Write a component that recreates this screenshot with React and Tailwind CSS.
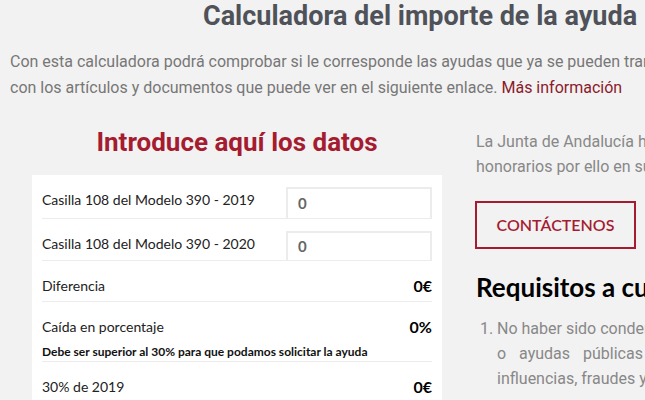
export default function App() {
  return (
    <div className="w-[645px] h-[400px] overflow-hidden bg-[#f2f2f2] font-['Roboto',sans-serif]">
      <h1 className="whitespace-nowrap pl-[203px] text-[27px] leading-[32px] font-bold text-[#4f5259]">
        Calculadora del importe de la ayuda
      </h1>
      <p className="mt-[17px] pl-[10px] whitespace-nowrap text-[16px] leading-[26px] text-[#777]">
        Con esta calculadora podrá comprobar si le corresponde las ayudas que ya se pueden tramitar de acuerdo
        <br />
        con los artículos y documentos que puede ver en el siguiente enlace.{" "}
        <a className="text-[#8b1a2b]">Más información</a>
      </p>
      <div className="flex mt-[24px]">
        <div className="w-[475px] shrink-0 pl-[32px] pr-[33px]">
          <h2 className="text-center text-[26px] leading-[34px] font-bold text-[#a51c30]">
            Introduce aquí los datos
          </h2>
          <div className="mt-[16px] bg-white px-[10px] font-['Lato',sans-serif] text-[14px] text-[#222]">
            <div className="flex items-start justify-between border-b border-[#ececec] pt-[12px]">
              <span className="pt-[3px] leading-[20px]">Casilla 108 del Modelo 390 - 2019</span>
              <div className="w-[146px] h-[31px] border-2 border-b-0 border-[#ececec] pl-[10px] pt-[4px] text-[15px] font-bold text-[#666] leading-[20px]">0</div>
            </div>
            <div className="flex items-start justify-between border-b border-[#ececec] pt-[12px]">
              <span className="pt-[3px] leading-[20px]">Casilla 108 del Modelo 390 - 2020</span>
              <div className="w-[146px] h-[29px] border-2 border-b-0 border-[#ececec] pl-[10px] pt-[3px] text-[15px] font-bold text-[#666] leading-[20px]">0</div>
            </div>
            <div className="flex justify-between items-center border-b border-[#ececec] pt-[15px] pb-[5px] leading-[20px]">
              <span>Diferencia</span>
              <span className="text-[16px] font-bold text-black">0€</span>
            </div>
            <div className="border-b border-[#ececec] pt-[15px] pb-[1px]">
              <div className="flex justify-between items-center leading-[20px]">
                <span>Caída en porcentaje</span>
                <span className="text-[16px] font-bold text-black">0%</span>
              </div>
              <div className="mt-[7px] text-[12px] leading-[16px] font-bold text-[#111]">
                Debe ser superior al 30% para que podamos solicitar la ayuda
              </div>
            </div>
            <div className="flex justify-between items-center pt-[15px] pb-[5px] leading-[20px]">
              <span>30% de 2019</span>
              <span className="text-[16px] font-bold text-black">0€</span>
            </div>
          </div>
        </div>
        <div className="pt-[4px] whitespace-nowrap">
          <p className="pl-[1px] text-[16px] leading-[25px] text-[#888]">
            La Junta de Andalucía ha aprobado estas ayudas
            <br />
            honorarios por ello en su tramitación
          </p>
          <div className="mt-[22px] w-[161px] h-[48px] border-2 border-[#a51c30] flex items-center justify-center font-['Lato',sans-serif] text-[16px] font-semibold text-[#a51c30]">
            CONTÁCTENOS
          </div>
          <h3 className="mt-[22px] pl-[1px] font-['Lato',sans-serif] text-[26px] leading-[32px] font-bold text-black">
            Requisitos a cumplir
          </h3>
          <ol className="mt-[13px] text-[16px] leading-[25px] text-[#888]">
            <li className="flex">
              <span className="w-[22px] pl-[5px] shrink-0">1.</span>
              <span>
                No haber sido condenado
                <br />
                <span className="[word-spacing:9px]">o ayudas públicas por</span>
                <br />
                influencias, fraudes y
              </span>
            </li>
          </ol>
        </div>
      </div>
    </div>
  );
}
